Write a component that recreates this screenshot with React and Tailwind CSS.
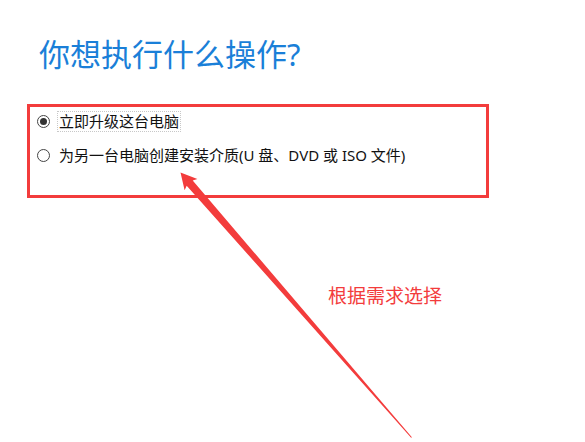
import React from 'react';

const font = { fontFamily: '"Noto Sans", "Noto Sans CJK SC", sans-serif' };

const Radio = ({ checked }) => (
  <span className="w-[13px] h-[13px] shrink-0 rounded-full border border-[#444] bg-white flex items-center justify-center">
    {checked && <span className="w-[7px] h-[7px] rounded-full bg-[#333]" />}
  </span>
);

const Option = ({ checked, focused, children }) => (
  <label className="flex items-center h-[21px] pl-[7px] gap-[7px]">
    <Radio checked={checked} />
    <span
      className={`h-[21px] flex items-center px-[1px] text-[15px] leading-none text-[#111] border border-dotted ${
        focused ? 'border-[#c8c8c8]' : 'border-transparent'
      }`}
    >
      {children}
    </span>
  </label>
);

export default function App() {
  return (
    <div className="relative w-[585px] h-[442px] bg-white overflow-hidden" style={font}>
      {/* Title */}
      <div className="pt-[39px] pl-[39px]">
        <h1 className="text-[31px] leading-none font-normal text-[#1a7fd8]">你想执行什么操作?</h1>
      </div>

      {/* Highlighted options */}
      <div className="ml-[27px] mt-[34px] w-[462px] h-[94px] border-[3px] border-[#f33c3c] pt-[4px] flex flex-col gap-[13px]">
        <Option checked focused>立即升级这台电脑</Option>
        <Option>为另一台电脑创建安装介质(U 盘、DVD 或 ISO 文件)</Option>
      </div>

      {/* Annotation arrow */}
      <svg className="absolute inset-0 pointer-events-none" width="585" height="442" viewBox="0 0 585 442">
        <polygon
          fill="#f33c3c"
          points="180.5,172.5 197.4,179 192.7,180.5 411.9,437.2 411.1,437.8 186.7,185.7 184.6,190.2"
        />
      </svg>

      {/* Annotation label */}
      <div className="absolute left-[328px] top-[287px] text-[19px] leading-none text-[#f33c3c]">
        根据需求选择
      </div>
    </div>
  );
}
